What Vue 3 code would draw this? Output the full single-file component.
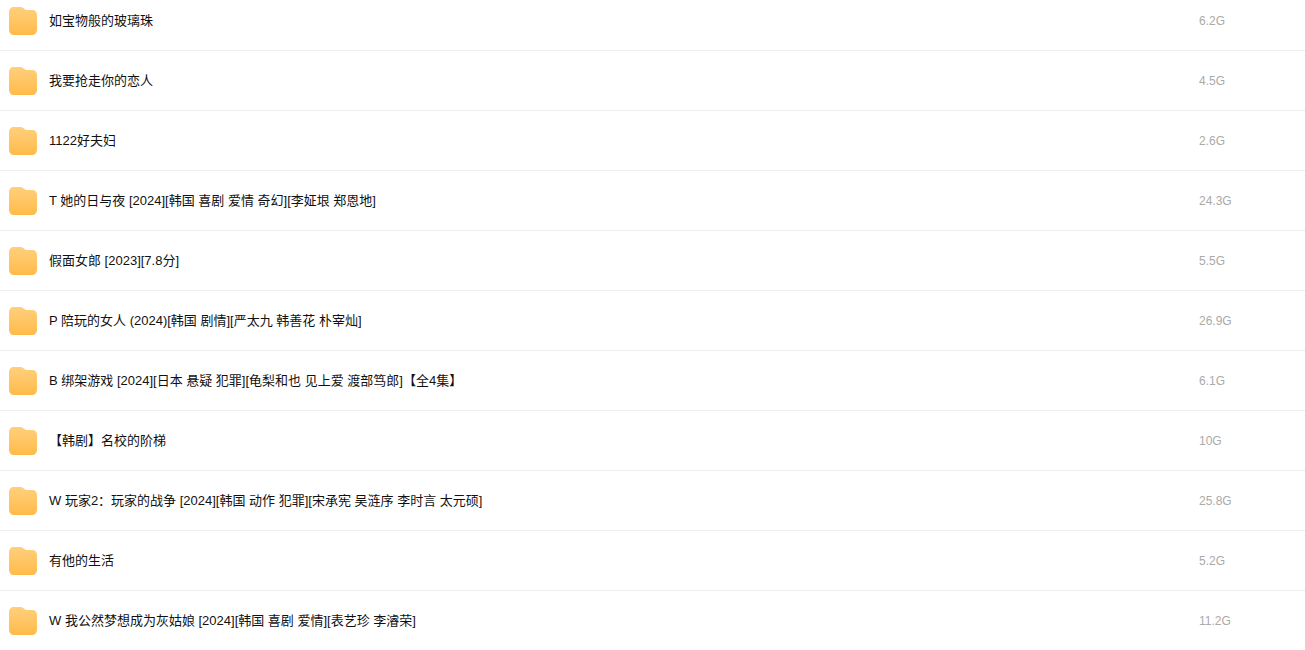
<script setup>
const folders = [
  { name: '如宝物般的玻璃珠', size: '6.2G' },
  { name: '我要抢走你的恋人', size: '4.5G' },
  { name: '1122好夫妇', size: '2.6G' },
  { name: 'T 她的日与夜 [2024][韩国 喜剧 爱情 奇幻][李姃垠 郑恩地]', size: '24.3G' },
  { name: '假面女郎 [2023][7.8分]', size: '5.5G' },
  { name: 'P 陪玩的女人 (2024)[韩国 剧情][严太九 韩善花 朴宰灿]', size: '26.9G' },
  { name: 'B 绑架游戏 [2024][日本 悬疑 犯罪][龟梨和也 见上爱 渡部笃郎]【全4集】', size: '6.1G' },
  { name: '【韩剧】名校的阶梯', size: '10G' },
  { name: 'W 玩家2：玩家的战争 [2024][韩国 动作 犯罪][宋承宪 吴涟序 李时言 太元硕]', size: '25.8G' },
  { name: '有他的生活', size: '5.2G' },
  { name: 'W 我公然梦想成为灰姑娘 [2024][韩国 喜剧 爱情][表艺珍 李濬荣]', size: '11.2G' },
]
</script>

<template>
  <main class="viewport">
    <table class="files">
      <tbody>
        <tr v-for="folder in folders" :key="folder.name">
          <td class="name-cell">
            <a class="name" href="#">
              <svg class="icon" viewBox="0 0 28 28" aria-hidden="true">
                <defs>
                  <linearGradient id="folder-fill" x1="0" y1="0" x2="0" y2="1">
                    <stop offset="0" stop-color="#ffcf7d" />
                    <stop offset="1" stop-color="#ffbb49" />
                  </linearGradient>
                </defs>
                <path
                  fill="url(#folder-fill)"
                  d="M5 0H11.2C12.4 0 13.3 .4 14.2 1.1L15.4 2.1C16.2 2.8 17 3 18 3H23C26 3 28 5 28 8V22.5C28 26 26 28 22.5 28H5.5C2 28 0 26 0 22.5V5C0 2 2 0 5 0Z"
                />
              </svg>
              <span>{{ folder.name }}</span>
            </a>
          </td>
          <td class="size">{{ folder.size }}</td>
        </tr>
      </tbody>
    </table>
  </main>
</template>

<style>
body {
  background: #fff;
}
</style>

<style scoped>
.viewport {
  height: 100vh;
  overflow: hidden;
  font-family: "Liberation Sans", Arial, "Noto Sans CJK SC", sans-serif;
}

/* The list is scrolled slightly past the top of its first row. */
.files {
  width: 100%;
  margin-top: -9px;
  border-collapse: separate;
  border-spacing: 0;
  table-layout: fixed;
}

.files td {
  box-sizing: border-box;
  height: 60px;
  padding: 0;
  border-bottom: 1px solid #eee;
  vertical-align: middle;
}

.files tr:last-child td {
  border-bottom-color: transparent;
}

.name {
  display: flex;
  align-items: center;
  gap: 12px;
  padding-left: 9px;
  color: #111;
  font-size: 13px;
  line-height: 20px;
  text-decoration: none;
  white-space: nowrap;
}

.icon {
  flex: none;
  width: 28px;
  height: 28px;
}

.files .size {
  width: 106px;
  color: #aaa;
  font-size: 12px;
  line-height: 20px;
}
</style>
